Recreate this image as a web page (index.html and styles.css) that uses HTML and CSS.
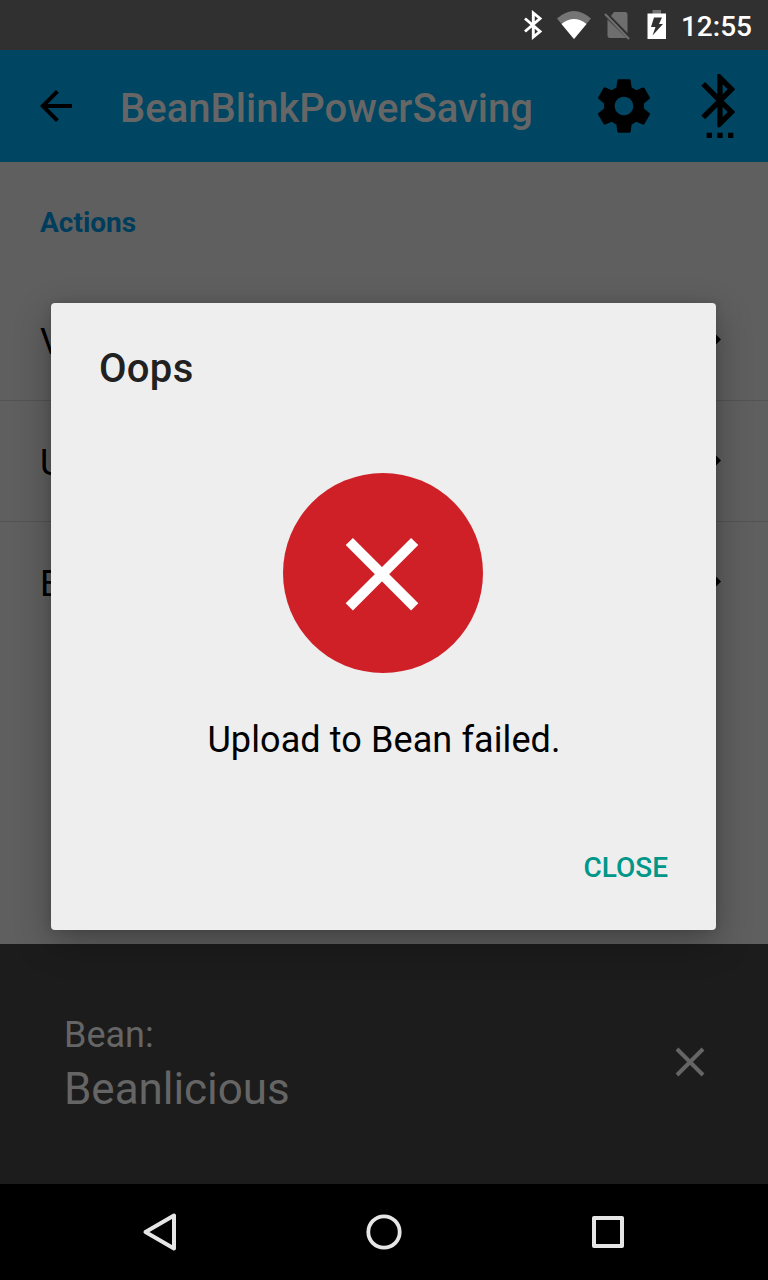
FILE: index.html
```html
<!DOCTYPE html>
<html lang="en">
<head>
<meta charset="utf-8">
<title>BeanBlinkPowerSaving</title>
<link rel="stylesheet" href="styles.css">
</head>
<body>
<div class="screen">
  <div class="status">
    <svg class="st-bt" width="20" height="30" viewBox="0 0 20 30"><path d="M2 8.500 L17 21.500 L10.300 27 V3 L17 8.500 L2 21.500" fill="none" stroke="#fff" stroke-width="2.900"/></svg>
    <svg class="st-wifi" width="36" height="30" viewBox="0 0 36 30"><path d="M1 8.500 Q18 -6.500 35 8.500 L18 29 Z" fill="#757575"/><path d="M5.500 14 Q18 4 30.500 14 L18 29 Z" fill="#fff"/></svg>
    <svg class="st-sim" width="28" height="30" viewBox="0 0 28 30"><path d="M11 2 H22 Q24.500 2 24.500 4.500 V23 L8 6 Z M4.500 9.500 L23.500 28 H7 Q4.500 28 4.500 25.500 Z" fill="#6e6e6e"/><path d="M2 4 L26 29" stroke="#6e6e6e" stroke-width="2.200"/></svg>
    <svg class="st-bat" width="20" height="30" viewBox="0 0 20 30"><path d="M5.500 0 H14 V4 H5.500Z" fill="#757575"/><path d="M.5 3.500 H19 V29 H.5Z" fill="#fff"/><path d="M7 7.500 H15 L12 14 H16 L5.500 25.500 L8.500 17 H4Z" fill="#303030"/></svg>
    <span class="clock">12:55</span>
  </div>

  <header class="toolbar">
    <svg class="back" width="48" height="48" viewBox="0 0 24 24"><path d="M20 11H7.830l5.590-5.590L12 4l-8 8 8 8 1.410-1.410L7.830 13H20v-2z"/></svg>
    <h1 class="title">BeanBlinkPowerSaving</h1>
    <svg width="64" height="64" viewBox="0 0 24 24"><path d="M19.430 12.980c.04-.32.070-.64.070-.98s-.03-.66-.07-.98l2.110-1.650c.19-.15.240-.42.120-.64l-2-3.460c-.12-.22-.39-.3-.61-.22l-2.490 1c-.52-.4-1.080-.73-1.690-.98l-.38-2.650C14.460 2.180 14.250 2 14 2h-4c-.25 0-.46.180-.49.420l-.38 2.650c-.61.250-1.170.590-1.690.980l-2.490-1c-.23-.09-.49 0-.61.220l-2 3.460c-.13.220-.07.490.120.640l2.110 1.650c-.04.320-.07.650-.07.980s.03.660.070.980l-2.110 1.650c-.19.150-.24.420-.12.640l2 3.460c.12.220.390.300.610.220l2.490-1c.52.400 1.080.730 1.690.980l.38 2.650c.03.240.240.420.490.420h4c.25 0 .460-.18.490-.42l.38-2.650c.61-.25 1.170-.59 1.690-.98l2.490 1c.23.090.490 0 .610-.22l2-3.460c.12-.22.070-.49-.12-.64l-2.110-1.650zM12 15.500c-1.930 0-3.500-1.570-3.500-3.500s1.570-3.500 3.500-3.500 3.500 1.570 3.500 3.500-1.570 3.500-3.500 3.500z"/></svg>
    <svg class="bt" width="64" height="64" viewBox="0 0 24 24"><path d="M11 24h2v-2h-2v2zm-4 0h2v-2H7v2zm8 0h2v-2h-2v2zm2.710-18.290L12 0h-1v7.590L6.410 3 5 4.410 10.590 10 5 15.590 6.410 17 11 12.410V20h1l5.710-5.710-4.300-4.290 4.300-4.290zM13 3.830l1.880 1.880L13 7.590V3.830zm1.880 10.460L13 16.170v-3.760l1.880 1.880z"/></svg>
  </header>

  <main class="content">
    <h2 class="section">Actions</h2>
    <div class="row"><span>V</span><svg width="12" height="20" viewBox="0 0 12 20"><path d="M2 0.500 L11 9.500 L2 18.500Z"/></svg></div>
    <div class="row"><span>U</span><svg width="12" height="20" viewBox="0 0 12 20"><path d="M2 0.500 L11 9.500 L2 18.500Z"/></svg></div>
    <div class="row last"><span>E</span><svg width="12" height="20" viewBox="0 0 12 20"><path d="M2 0.500 L11 9.500 L2 18.500Z"/></svg></div>
  </main>

  <footer class="device">
    <div>
      <div class="label">Bean:</div>
      <div class="name">Beanlicious</div>
    </div>
    <svg class="dismiss" width="32" height="32" viewBox="0 0 32 32"><path d="M3 3 L29 29 M29 3 L3 29" stroke="#656565" stroke-width="4"/></svg>
  </footer>

  <nav class="nav">
    <svg width="40" height="44" viewBox="0 0 40 44"><path d="M5.500 22 L34 5.500 V38.500 Z" fill="none" stroke="#e6e6e6" stroke-width="4" stroke-linejoin="round"/></svg>
    <svg width="40" height="44" viewBox="0 0 40 44"><circle cx="20" cy="22" r="15.700" fill="none" stroke="#e6e6e6" stroke-width="3.800"/></svg>
    <svg width="40" height="44" viewBox="0 0 40 44"><rect x="6" y="8" width="28" height="28" fill="none" stroke="#e6e6e6" stroke-width="4" stroke-linejoin="round"/></svg>
  </nav>

  <section class="dialog" role="dialog">
    <h2 class="dialog-title">Oops</h2>
    <div class="dialog-body">
      <svg width="200" height="200" viewBox="0 0 200 200"><circle cx="100" cy="100" r="100" fill="#cf2027"/><path d="M66.300 68.500 L131.700 133.900 M131.700 68.500 L66.300 133.900" stroke="#fff" stroke-width="10.200"/></svg>
      <p class="message">Upload to Bean failed.</p>
    </div>
    <button class="close">CLOSE</button>
  </section>
</div>
</body>
</html>
```
FILE: styles.css
```css
* { box-sizing: border-box; margin: 0; }
body { font-family: Roboto, "Noto Sans", sans-serif; background: #000; }
svg { display: block; flex: none; }
.screen {
  position: relative;
  width: 768px;
  height: 1280px;
  display: flex;
  flex-direction: column;
  overflow: hidden;
}
.status {
  height: 50px;
  padding-right: 16px;
  display: flex;
  align-items: center;
  justify-content: flex-end;
  background: #303030;
}
.st-wifi { margin-left: 13px; }
.st-sim { margin-left: 11px; }
.st-bat { margin-left: 16px; }
.clock {
  margin-left: 14px;
  font-size: 28px;
  font-weight: 500;
  line-height: 32px;
  color: #fff;
  padding-top: 4px;
}
.toolbar {
  height: 112px;
  padding: 0 16px 0 32px;
  display: flex;
  align-items: center;
  background: #004561;
}
.title {
  flex: 1;
  margin-left: 40px;
  padding-top: 6px;
  font-size: 40px;
  font-weight: 500;
  line-height: 48px;
  color: #666;
  white-space: nowrap;
}
.bt { margin-left: 32px; }
.content { height: 782px; background: #5f5f5f; }
.section {
  height: 118px;
  padding: 45px 40px 0;
  font-size: 28px;
  line-height: 32px;
  font-weight: 700;
  color: #003d5c;
}
.row {
  height: 121px;
  padding: 0 46px 0 40px;
  display: flex;
  align-items: center;
  justify-content: space-between;
  font-size: 36px;
  line-height: 42px;
  color: #000;
  border-bottom: 1px solid #535353;
}
.row span { padding-top: 4px; }
.last { border-bottom-color: transparent; }
.device {
  height: 240px;
  padding: 0 62px 0 64px;
  display: flex;
  align-items: center;
  justify-content: space-between;
  background: #1c1c1c;
  color: #656565;
}
.label { font-size: 36px; line-height: 48px; }
.name { padding-top: 2px; font-size: 44px; line-height: 56px; letter-spacing: -.05px; }
.dismiss { margin-bottom: 4px; }
.nav {
  height: 96px;
  padding: 0 140px;
  display: flex;
  align-items: center;
  justify-content: space-between;
  background: #000;
}
.dialog {
  position: absolute;
  left: 51px;
  top: 303px;
  width: 665px;
  height: 627px;
  padding: 42px 48px 0;
  display: flex;
  flex-direction: column;
  background: #eee;
  border-radius: 4px;
  box-shadow: 0 12px 36px rgba(0, 0, 0, .3), 0 0 8px rgba(0, 0, 0, .1);
}
.dialog-title {
  font-size: 40px;
  font-weight: 500;
  line-height: 48px;
  letter-spacing: .3px;
  color: #212121;
}
.dialog-body {
  margin-top: 80px;
  padding-right: 1px;
  display: flex;
  flex-direction: column;
  align-items: center;
}
.message {
  margin-top: 46px;
  padding-left: 2px;
  font-size: 36px;
  line-height: 42px;
  letter-spacing: .1px;
  color: #000;
}
.close {
  align-self: flex-end;
  margin-top: 91px;
  padding: 0;
  border: 0;
  background: none;
  font: 500 28px/32px Roboto, sans-serif;
  color: #009688;
}
```
